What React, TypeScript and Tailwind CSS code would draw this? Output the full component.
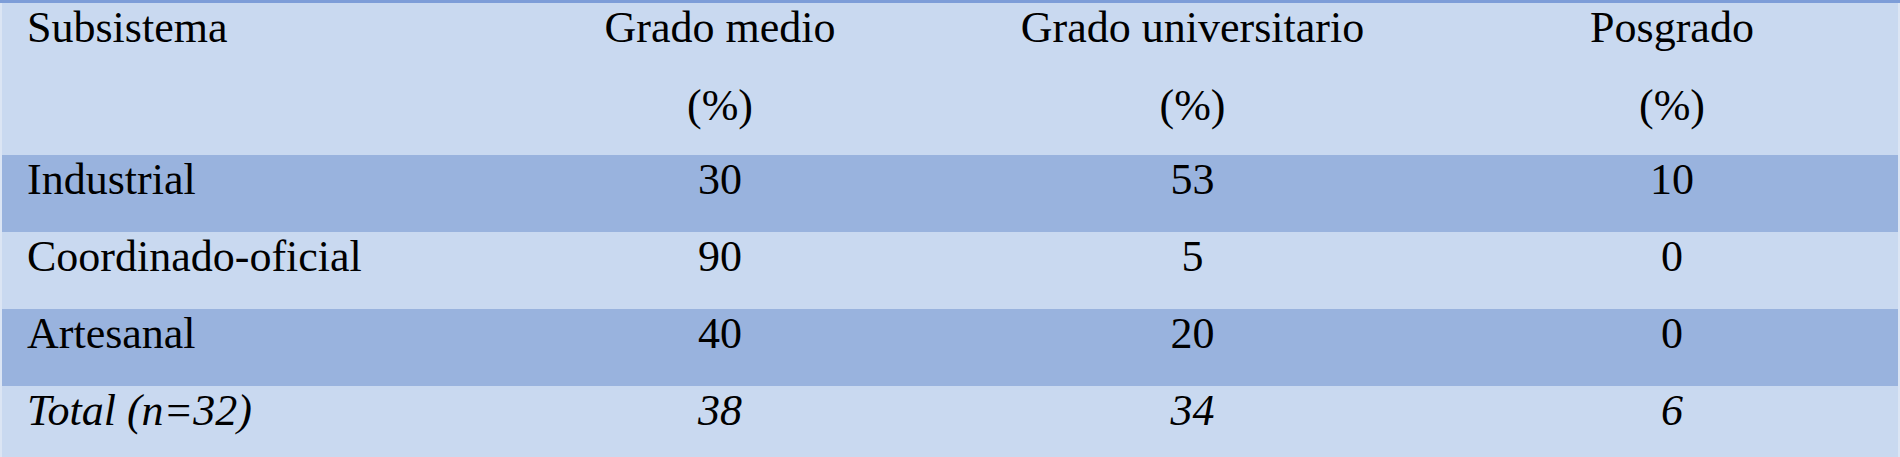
const header = ["Grado medio", "Grado universitario", "Posgrado"];

const rows = [
  { name: "Industrial", values: ["30", "53", "10"], dark: true },
  { name: "Coordinado-oficial", values: ["90", "5", "0"], dark: false },
  { name: "Artesanal", values: ["40", "20", "0"], dark: true },
];

const cols = "grid grid-cols-[499px_438px_507px_452px]";

export default function App() {
  return (
    <div className="w-[1900px] h-[457px] overflow-hidden bg-[#c9d9f0] text-black font-['Liberation_Serif','Times_New_Roman',serif] text-[44px] leading-[44px]">
      <div className="border-t-[3px] border-[#7d9dd8]">
        <div className="border-x-2 border-[#dbe5f4]">
          {/* header */}
          <div className={`${cols} h-[152px] bg-[#c9d9f0]`}>
            <div className="pl-[25px] pt-[3px]">Subsistema</div>
            {header.map((h) => (
              <div key={h} className="flex flex-col items-center pt-[3px]">
                <span>{h}</span>
                <span className="mt-[34px]">(%)</span>
              </div>
            ))}
          </div>

          {rows.map((r) => (
            <div key={r.name} className={`${cols} h-[77px] ${r.dark ? "bg-[#99b3de]" : "bg-[#c9d9f0]"}`}>
              <div className="pl-[25px] pt-[3px]">{r.name}</div>
              {r.values.map((v, i) => (
                <div key={i} className="text-center pt-[3px]">{v}</div>
              ))}
            </div>
          ))}

          <div className={`${cols} h-[77px] bg-[#c9d9f0] italic`}>
            <div className="pl-[25px] pt-[3px]">Total (n=32)</div>
            <div className="text-center pt-[3px]">38</div>
            <div className="text-center pt-[3px]">34</div>
            <div className="text-center pt-[3px]">6</div>
          </div>
        </div>
      </div>
    </div>
  );
}
